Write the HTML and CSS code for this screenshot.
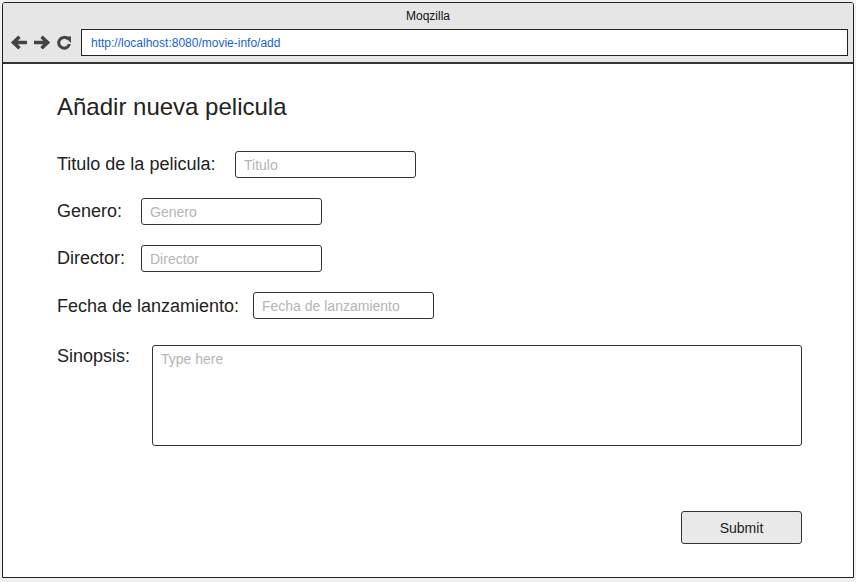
FILE: index.html
```html
<!DOCTYPE html>
<html lang="es">
<head>
<meta charset="utf-8">
<title>Moqzilla</title>
<link rel="stylesheet" href="styles.css">
</head>
<body>
<div class="window">
  <div class="chrome">
    <div class="title">Moqzilla</div>
    <div class="toolbar">
      <div class="nav">
        <svg class="icon" width="18" height="17" viewBox="0 0 18 17"><path d="M17 8.5H4M9.5 2.8L3.4 8.5l6.1 5.7" fill="none" stroke="#444" stroke-width="3.5" stroke-linejoin="miter" stroke-linecap="butt"/></svg>
        <svg class="icon" width="18" height="17" viewBox="0 0 18 17"><path d="M1 8.5h13M8.5 2.8l6.1 5.7-6.1 5.7" fill="none" stroke="#444" stroke-width="3.5" stroke-linejoin="miter" stroke-linecap="butt"/></svg>
        <svg class="icon" width="16" height="17" viewBox="0 0 16 17"><path d="M12 5A5.4 5.4 0 1 0 13.4 10" fill="none" stroke="#444" stroke-width="3"/><path d="M8.5 2.5h6.5V9z" fill="#444"/></svg>
      </div>
      <div class="url">http://localhost:8080/movie-info/add</div>
    </div>
  </div>
  <div class="content">
    <h1 class="heading">Añadir nueva pelicula</h1>
    <div class="row row-titulo">
      <label class="label">Titulo de la pelicula:</label>
      <input class="field" type="text" placeholder="Titulo">
    </div>
    <div class="row row-genero">
      <label class="label">Genero:</label>
      <input class="field" type="text" placeholder="Genero">
    </div>
    <div class="row row-director">
      <label class="label">Director:</label>
      <input class="field" type="text" placeholder="Director">
    </div>
    <div class="row row-fecha">
      <label class="label">Fecha de lanzamiento:</label>
      <input class="field" type="text" placeholder="Fecha de lanzamiento">
    </div>
    <div class="row row-sinopsis">
      <label class="label">Sinopsis:</label>
      <textarea class="area" placeholder="Type here"></textarea>
    </div>
    <div class="actions">
      <button class="submit" type="button">Submit</button>
    </div>
  </div>
</div>
</body>
</html>
```
FILE: styles.css
```css
* { box-sizing: border-box; }
html, body { margin: 0; padding: 0; }
body {
  width: 856px;
  height: 582px;
  background: #f0f0f0;
  font-family: "Liberation Sans", Arial, sans-serif;
  color: #222;
  padding: 2px 2px 4px 2px;
}
.window {
  width: 852px;
  height: 576px;
  border: 1.5px solid #222;
  border-radius: 3px 3px 0 0;
  background: #fff;
  display: flex;
  flex-direction: column;
  overflow: hidden;
}
.chrome {
  background: #e6e6e6;
  border-bottom: 2px solid #333;
  height: 61px;
  display: flex;
  flex-direction: column;
}
.title {
  font-size: 12px;
  text-align: center;
  color: #111;
  padding-top: 6px;
  height: 26px;
}
.toolbar {
  display: flex;
  align-items: center;
  padding-left: 7px;
  padding-right: 5px;
}
.nav {
  display: flex;
  align-items: center;
  gap: 5px;
  width: 71px;
}
.icon { display: block; }
.url {
  flex: 1;
  height: 27px;
  border: 1.5px solid #222;
  background: #fff;
  font-size: 12px;
  color: #1a5fd6;
  padding: 6px 0 0 9px;
}
.content {
  padding: 30px 0 0 54px;
  flex: 1;
  display: flex;
  flex-direction: column;
}
.heading {
  font-size: 24px;
  font-weight: normal;
  margin: 0 0 31px 0;
  color: #222;
  line-height: 26px;
}
.row {
  display: flex;
  align-items: center;
  margin-bottom: 20px;
}
.label {
  font-size: 18px;
  color: #222;
}
.field {
  width: 181px;
  height: 27px;
  border: 1px solid #333;
  border-radius: 3px;
  font-family: "Liberation Sans", Arial, sans-serif;
  font-size: 14px;
  padding: 0 0 0 8px;
  color: #222;
  background: #fff;
  outline: none;
}
.field::placeholder, .area::placeholder { color: #b5b5b5; }
.row-titulo .label { width: 178px; }
.row-genero .label, .row-director .label { width: 84px; }
.row-fecha .label { width: 196px; }
.row-fecha .label { padding-top: 2px; }
.row-fecha { margin-bottom: 26px; }
.row-sinopsis { align-items: flex-start; margin-bottom: 0; }
.row-sinopsis .label { width: 95px; padding-top: 1px; }
.area {
  width: 650px;
  height: 101px;
  border: 1px solid #333;
  border-radius: 3px;
  font-family: "Liberation Sans", Arial, sans-serif;
  font-size: 14px;
  padding: 5px 8px;
  resize: none;
  outline: none;
}
.actions {
  display: flex;
  justify-content: flex-end;
  width: 745px;
  margin-top: 65px;
}
.submit {
  width: 121px;
  height: 33px;
  border: 1px solid #333;
  border-radius: 3px;
  background: #e9e9e9;
  font-family: "Liberation Sans", Arial, sans-serif;
  font-size: 14px;
  color: #222;
}
```
